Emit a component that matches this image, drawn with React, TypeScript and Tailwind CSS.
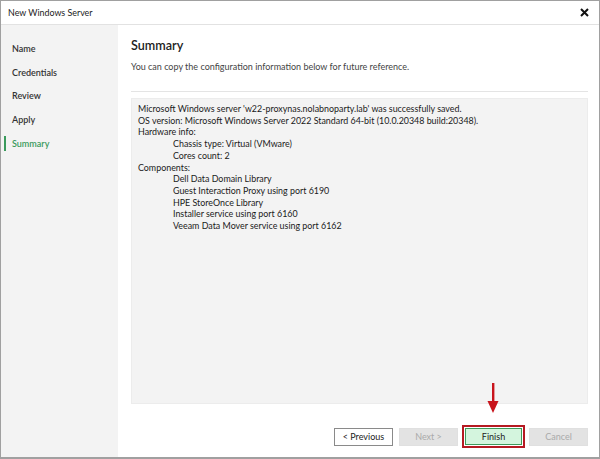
import React from 'react';

const steps = ['Name', 'Credentials', 'Review', 'Apply', 'Summary'];

const App: React.FC = () => {
  return (
    <div
      className="w-[600px] h-[459px] bg-white flex flex-col border border-[#a0a0a0] border-b-2 overflow-hidden text-[#222]"
      style={{ fontFamily: 'Lato, "Open Sans", sans-serif' }}
    >
      {/* Title bar */}
      <div className="h-[24px] shrink-0 flex items-center justify-between pl-[7px] pr-[10px] border-b border-[#e2e2e2]">
        <span className="text-[8.9px] text-[#222]">New Windows Server</span>
        <svg width="9" height="9" viewBox="0 0 9 9">
          <path d="M1 1 L8 8 M8 1 L1 8" stroke="#111" strokeWidth="2" />
        </svg>
      </div>

      <div className="flex flex-1 min-h-0">
        {/* Sidebar */}
        <div className="w-[117px] shrink-0 bg-[#f3f3f3] pt-[12px] flex flex-col">
          {steps.map(step => (
            <div key={step} className="h-[23.7px] flex items-center relative pl-[11px]">
              {step === 'Summary' && <div className="absolute left-[3px] top-[4px] w-[2px] h-[15px] bg-[#3a9a5c]" />}
              <span
                className={
                  step === 'Summary'
                    ? 'text-[9px] font-semibold text-[#3a9a5c]'
                    : 'text-[9px] font-semibold text-[#333]'
                }
              >
                {step}
              </span>
            </div>
          ))}
        </div>

        {/* Main */}
        <div className="flex-1 flex flex-col pl-[13px] pr-[11px]">
          <div className="pt-[12px] text-[12.6px] font-semibold text-[#222] leading-[18px]">Summary</div>
          <div className="mt-[6px] text-[9px] text-[#444] leading-[12px]">
            You can copy the configuration information below for future reference.
          </div>
          <div className="mt-[18px] h-px bg-[#e4e4e4]" />
          <div className="mt-[6px] h-[306px] bg-[#f3f3f3] border border-[#ececec] pl-[6px] pt-[4px] text-[8.9px] leading-[11.7px] text-[#1a1a1a]">
            <div>Microsoft Windows server 'w22-proxynas.nolabnoparty.lab' was successfully saved.</div>
            <div>OS version: Microsoft Windows Server 2022 Standard 64-bit (10.0.20348 build:20348).</div>
            <div>Hardware info:</div>
            <div className="pl-[35px]">Chassis type: Virtual (VMware)</div>
            <div className="pl-[35px]">Cores count: 2</div>
            <div>Components:</div>
            <div className="pl-[35px]">Dell Data Domain Library</div>
            <div className="pl-[35px]">Guest Interaction Proxy using port 6190</div>
            <div className="pl-[35px]">HPE StoreOnce Library</div>
            <div className="pl-[35px]">Installer service using port 6160</div>
            <div className="pl-[35px]">Veeam Data Mover service using port 6162</div>
          </div>

          {/* Buttons */}
          <div className="flex-1 flex items-end justify-end pb-[9px] relative">
            <svg className="absolute left-[356px] top-[-21px]" width="12" height="31" viewBox="0 0 12 31">
              <rect x="5" y="0" width="2.4" height="19" fill="#c8141c" />
              <path d="M0.5 18 L11.5 18 L6 30 Z" fill="#c8141c" />
            </svg>
            <div className="flex items-center">
              <button className="w-[59px] h-[18px] bg-white border border-[#8a8a8a] text-[9px] text-[#222]">
                &lt; Previous
              </button>
              <button className="ml-[6px] w-[59px] h-[18px] bg-[#e3e3e3] border border-[#e0e0e0] text-[9px] text-[#aaa]">
                Next &gt;
              </button>
              <div className="ml-[4px] border-2 border-[#b51a22] p-px">
                <button className="w-[57px] h-[17px] bg-[#d4f5de] border border-[#3e9a5a] text-[9px] text-[#222] block">
                  Finish
                </button>
              </div>
              <button className="ml-[4px] w-[59px] h-[18px] bg-[#e3e3e3] border border-[#e0e0e0] text-[9px] text-[#aaa]">
                Cancel
              </button>
            </div>
          </div>
        </div>
      </div>
    </div>
  );
};

export default App;
